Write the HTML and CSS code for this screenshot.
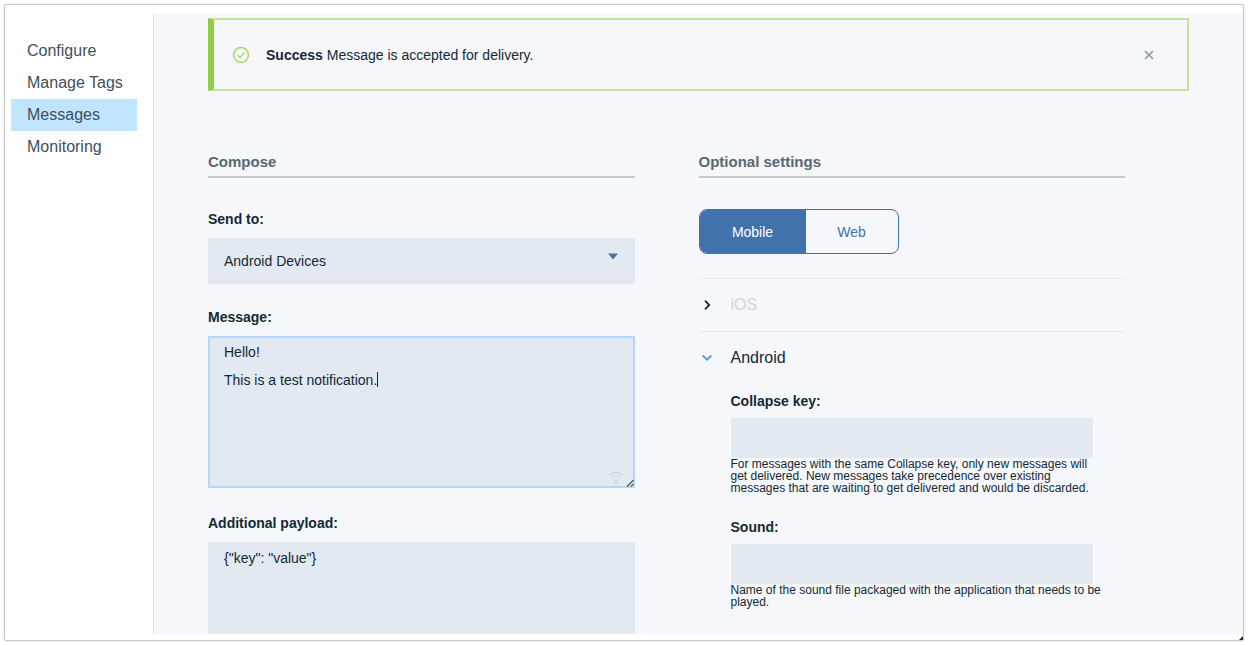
FILE: index.html
```html
<!DOCTYPE html>
<html lang="en">
<head>
<meta charset="utf-8">
<meta name="viewport" content="width=device-width, initial-scale=1">
<title>Push Notifications - Messages</title>
<link rel="stylesheet" href="styles.css">
</head>
<body>
<div class="window">
  <nav class="sidebar" aria-label="Sections">
    <a class="nav-link" href="#configure">Configure</a>
    <a class="nav-link" href="#tags">Manage Tags</a>
    <a class="nav-link nav-link-active" href="#messages" aria-current="page">Messages</a>
    <a class="nav-link" href="#monitoring">Monitoring</a>
  </nav>
  <main class="main">
    <div class="alert" role="status">
      <svg class="alert-icon" viewBox="0 0 18 18" aria-hidden="true"><circle cx="9" cy="9" r="7.4"/><path d="M5.7 9.2l2.4 2.3 4.3-4.7"/></svg>
      <p class="alert-text"><strong>Success</strong> Message is accepted for delivery.</p>
      <button class="alert-close" type="button" aria-label="Close"><svg class="close-icon" viewBox="0 0 10 10" aria-hidden="true"><path d="M1 1l8 8M9 1L1 9"/></svg></button>
    </div>
    <form class="columns">
      <section class="column">
        <h2 class="heading">Compose</h2>
        <div class="field">
          <label class="label" for="send-to">Send to:</label>
          <div class="select-wrap">
            <select class="select" id="send-to"><option>Android Devices</option></select>
            <svg class="select-arrow" viewBox="0 0 10 7" aria-hidden="true"><path d="M0 0.5h10L5 6.5z"/></svg>
          </div>
        </div>
        <div class="field field-message">
          <label class="label" for="message">Message:</label>
          <div class="message-wrap">
            <textarea class="textarea textarea-focused" id="message">Hello!
This is a test notification.</textarea>
            <span class="caret"></span>
            <svg class="offline-icon" viewBox="0 0 14 14" aria-hidden="true"><path d="M1 4.2Q7-1.2 13 4.2M3.3 6.6Q7 3.4 10.7 6.6M4.6 8.2l4.8 5M9.4 8.2l-4.8 5"/></svg>
            <svg class="grip" viewBox="0 0 8 8" aria-hidden="true"><path d="M1 7.5L7.5 1M4.8 7.5L7.5 4.8"/></svg>
          </div>
        </div>
        <div class="field">
          <label class="label" for="payload">Additional payload:</label>
          <textarea class="textarea" id="payload">{"key": "value"}</textarea>
        </div>
      </section>
      <section class="column">
        <h2 class="heading">Optional settings</h2>
        <div class="toggle">
          <button class="toggle-button toggle-active" type="button" aria-pressed="true">Mobile</button>
          <button class="toggle-button" type="button" aria-pressed="false">Web</button>
        </div>
        <div class="panel">
          <button class="panel-button panel-disabled" type="button" aria-expanded="false"><svg class="chevron" viewBox="0 0 16 16" aria-hidden="true"><path d="M6 3.7l4.2 4.3L6 12.3"/></svg>iOS</button>
        </div>
        <div class="panel">
          <button class="panel-button" type="button" aria-expanded="true"><svg class="chevron chevron-open" viewBox="0 0 16 16" aria-hidden="true"><path d="M3.7 5.5L8 9.7l4.3-4.2"/></svg>Android</button>
          <div class="panel-body">
            <div class="setting">
              <label class="label label-tight" for="collapse">Collapse key:</label>
              <input class="input" id="collapse" type="text">
              <p class="help">For messages with the same Collapse key, only new messages will get delivered. New messages take precedence over existing messages that are waiting to get delivered and would be discarded.</p>
            </div>
            <div class="setting">
              <label class="label label-tight" for="sound">Sound:</label>
              <input class="input" id="sound" type="text">
              <p class="help">Name of the sound file packaged with the application that needs to be played.</p>
            </div>
          </div>
        </div>
      </section>
    </form>
  </main>
  <svg class="window-grip" viewBox="0 0 4 4" aria-hidden="true"><path d="M4 0v4H0z"/></svg>
</div>
</body>
</html>
```

FILE: styles.css
```css
* { box-sizing: border-box; }

body {
  margin: 0;
  height: 100vh;
  padding: 4px;
  overflow: hidden;
  background: #fff;
  color: #152935;
  font: 14px/20px "Liberation Sans", Arial, sans-serif;
}

button, select, input, textarea { font: inherit; color: inherit; }

.window {
  position: relative;
  display: flex;
  height: 100%;
  padding: 9px 0 6px 6px;
  border: 1px solid #c8c8c8;
  border-radius: 2px;
  box-shadow: 0 0 3px #ddd;
}

.window-grip {
  position: absolute;
  right: 0;
  bottom: 0;
  width: 4px;
  height: 4px;
  fill: #222;
}

.sidebar {
  flex: none;
  width: 142px;
  padding: 21px 16px 0 0;
}

.nav-link {
  display: block;
  padding-left: 16px;
  color: #414f59;
  font-size: 16px;
  line-height: 32px;
  text-decoration: none;
  white-space: nowrap;
}

.nav-link-active { background: #c0e6ff; }

.main {
  flex: 1;
  min-width: 0;
  padding: 4px 54px 0;
  overflow: hidden;
  border-left: 1px solid #dfe3e8;
  background: #f5f7fb;
}

.alert {
  display: flex;
  align-items: center;
  height: 73px;
  padding: 0 33px 0 18px;
  border: 2px solid #c2e398;
  border-left: 6px solid #8fcb43;
}

.alert-icon {
  width: 18px;
  height: 18px;
  margin-right: 16px;
  fill: none;
  stroke: #a5d867;
  stroke-width: 1.5;
}

.alert-text { flex: 1; margin: 0; }

.alert-close {
  display: flex;
  padding: 0;
  border: 0;
  background: none;
}

.close-icon {
  width: 10px;
  height: 10px;
  fill: none;
  stroke: #8c9ba5;
  stroke-width: 1.7;
}

.columns {
  display: grid;
  grid-template-columns: 1fr 1fr;
  margin-top: 61px;
}

.column { min-width: 0; padding-right: 64px; }

.heading {
  margin: 0 0 31px;
  padding-bottom: 4px;
  border-bottom: 2px solid #c3cad0;
  color: #5a6872;
  font-size: 15px;
  line-height: 20px;
}

.field { margin-bottom: 23px; }

.field-message { margin-bottom: 25px; }

.label {
  display: block;
  margin-bottom: 9px;
  font-weight: bold;
}

.label-tight { margin-bottom: 7px; }

.select-wrap, .message-wrap { position: relative; display: flex; }

.select {
  appearance: none;
  width: 100%;
  height: 46px;
  padding: 0 16px;
  border: 0;
  border-radius: 0;
  background: #e2e9f1;
}

.select-arrow {
  position: absolute;
  top: 15px;
  right: 17px;
  width: 10px;
  height: 7px;
  fill: #4272b0;
  pointer-events: none;
}

.textarea {
  display: block;
  width: 100%;
  height: 152px;
  padding: 0 14px;
  border: 2px solid #e2e9f1;
  border-radius: 0;
  outline: none;
  background: #e2e9f1;
  line-height: 28px;
  resize: none;
}

.textarea-focused { border-color: #b3d8f9; }

.caret {
  position: absolute;
  top: 36px;
  left: 169px;
  width: 1px;
  height: 15px;
  background: #152935;
}

.offline-icon {
  position: absolute;
  right: 12px;
  bottom: 3px;
  width: 14px;
  height: 14px;
  fill: none;
  stroke: #d0d4d9;
  stroke-width: 1.2;
}

.grip {
  position: absolute;
  right: 1px;
  bottom: 1px;
  width: 8px;
  height: 8px;
  fill: none;
  stroke: #555;
  stroke-width: 1.2;
}

.toggle {
  display: flex;
  width: 200px;
  height: 45px;
  margin-bottom: 24px;
  overflow: hidden;
  border: 1px solid #4272ab;
  border-radius: 8px;
}

.toggle-button {
  flex: 1 1 92px;
  padding: 0;
  border: 0;
  background: none;
  color: #4272b0;
}

.toggle-active {
  flex-basis: 106px;
  background: #4272ab;
  color: #fff;
}

.panel { border-top: 1px solid #e4eaf0; }

.panel-button {
  display: flex;
  align-items: center;
  gap: 16px;
  width: 100%;
  padding: 14px 0;
  border: 0;
  background: none;
  font-size: 16px;
  line-height: 24px;
}

.panel-disabled { color: #d3d4d6; }

.chevron {
  width: 16px;
  height: 16px;
  fill: none;
  stroke: #152935;
  stroke-width: 1.8;
}

.chevron-open { stroke: #5596e6; }

.panel-body { padding: 7px 32px 0; }

.setting { margin-bottom: 23px; }

.input {
  display: block;
  width: 100%;
  height: 40px;
  padding: 0 16px;
  border: 0;
  border-radius: 0;
  background: #e2e9f1;
}

.help {
  margin: 0 -12px 0 0;
  font-size: 12px;
  line-height: 12px;
}
```
